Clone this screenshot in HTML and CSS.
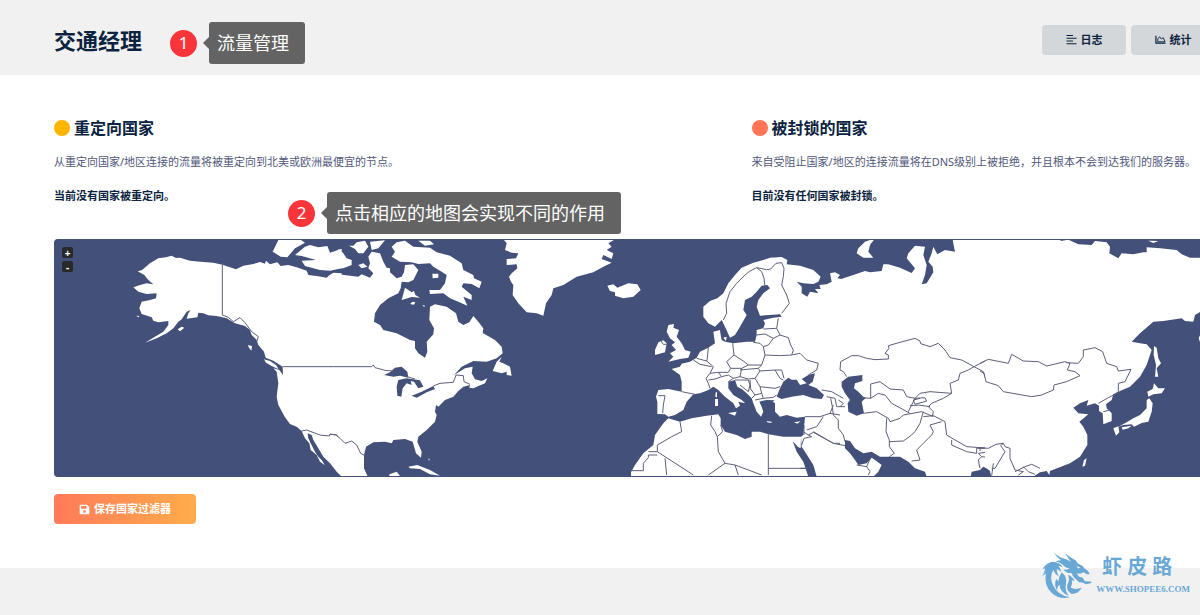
FILE: index.html
```html
<!DOCTYPE html>
<html lang="zh-CN">
<head>
<meta charset="utf-8">
<meta name="viewport" content="width=device-width, initial-scale=1">
<title>交通经理</title>
<link rel="stylesheet" href="styles.css">
</head>
<body>
<header class="page-header">
  <h1 class="page-title">交通经理</h1>
  <div class="actions">
    <button class="btn btn-muted" type="button">
      <svg class="icon" viewBox="0 0 22 22" aria-hidden="true"><path d="M1 3h13M1 8.500h20M1 14h13M1 19.500h20" fill="none" stroke="currentColor" stroke-width="2"/></svg>
      日志
    </button>
    <button class="btn btn-muted" type="button">
      <svg class="icon" viewBox="0 0 24 22" aria-hidden="true"><path d="M2 3v16h21" fill="none" stroke="currentColor" stroke-width="2.600"/><path d="M6 16v-6l4-5 4 5 4-3 4 9z" fill="none" stroke="currentColor" stroke-width="2"/></svg>
      统计
    </button>
  </div>
</header>

<main class="content">
  <div class="filters">
    <section class="filter">
      <h2 class="filter-title"><span class="dot dot-redirect"></span>重定向国家</h2>
      <p class="filter-text">从重定向国家/地区连接的流量将被重定向到北美或欧洲最便宜的节点。</p>
      <p class="filter-status">当前没有国家被重定向。</p>
    </section>
    <section class="filter">
      <h2 class="filter-title"><span class="dot dot-blocked"></span>被封锁的国家</h2>
      <p class="filter-text">来自受阻止国家/地区的连接流量将在DNS级别上被拒绝，并且根本不会到达我们的服务器。</p>
      <p class="filter-status">目前没有任何国家被封锁。</p>
    </section>
  </div>

  <div class="map">
    <div class="map-zoom">
      <button class="zoom-btn" type="button" aria-label="放大">+</button>
      <button class="zoom-btn" type="button" aria-label="缩小">-</button>
    </div>
    <svg class="map-canvas" viewBox="165 720 3435 708" preserveAspectRatio="xMinYMin slice" role="img" aria-label="世界地图">
      <!-- Alaska, western Canada and USA -->
      <g transform="translate(120 690)">
        <path class="land" d="M293 124L306 120 330 100 355 85 378 82 395 77 408 84 420 83 450 92 490 96 520 98 547 104 570 112 588 118 610 107 640 102 660 96 675 101 678 92 690 103 712 97 722 108 745 105 770 112 800 122 805 135 830 138 860 143 868 136 880 128 905 130 905 740 890 725 870 700 850 680 835 655 820 630 815 615 803 610 805 625 812 640 825 665 835 680 845 690 855 706 840 695 830 675 812 660 808 640 795 625 785 603 770 590 750 582 735 562 715 525 710 500 715 460 710 425 700 415 718 420 729 435 728 410 700 392 677 383 672 365 655 345 650 330 635 315 630 300 615 288 585 280 560 265 530 258 505 256 490 250 475 248 472 262 450 265 440 266 445 250 452 240 440 245 425 268 415 275 400 295 380 310 350 325 315 338 345 320 370 305 385 285 385 273 355 277 340 272 335 262 305 252 298 235 305 215 330 210 348 205 350 190 320 192 295 185 280 172 300 165 320 160 340 163 325 150 313 135z"/>
        <path class="land" d="M413 298L425 290 433 293 420 304zM288 257L298 258 296 262zM623 345L636 348 634 362 628 355zM672 388L690 393 708 405 716 418 695 408 678 398zM715 30L698 65 722 80 742 82 765 55 795 38 780 28zM795 50L765 75 785 78 828 90 785 92 795 108 840 120 870 122 905 115 905 56 870 68 862 48 835 52 810 45z"/>
        <path class="border" d="M547 104V255L565 262 580 275 600 263 615 278 635 305 655 320 650 335M728 410H872M785 603L800 600 840 615 868 618 870 612 890 615 900 625"/>
      </g>
      <!-- Eastern North America, Greenland, Iceland -->
      <g transform="translate(990 555)">
        <path class="land" d="M25 268L60 272 85 275 95 268 120 278 130 265 115 250 120 235 115 215 125 200 150 205 160 230 170 248 180 250 180 262 200 280 215 275 222 262 225 240 250 238 265 255 250 285 235 292 215 290 212 310 205 325 175 340 150 360 135 385 132 410 150 420 160 435 200 445 240 465 255 468 255 490 265 505 285 518 292 500 290 470 310 448 312 430 298 405 300 365 315 358 350 365 378 385 385 410 400 420 418 412 430 393 445 410 460 430 458 444 495 465 515 485 518 505 500 520 470 530 430 528 395 545 372 570 405 550 428 545 425 565 435 583 455 588 472 580 465 595 430 610 418 608 420 600 400 605 385 618 370 635 345 645 325 665 318 660 315 680 320 690 315 710 290 735 265 755 262 770 275 800 273 818 258 805 248 770 225 762 190 765 185 775 165 770 130 772 108 785 102 810 102 850 112 872 112 885 36 885 25 840z"/>
        <path class="land" d="M25 191L40 205 50 220 65 225 65 240 40 250 25 250zM85 240L100 235 112 245 95 250zM57 182L70 182 80 172 105 167 115 185 100 205 85 205 75 192zM120 170L165 166 145 190 125 195zM185 185L200 172 225 167 250 185 300 188 320 202 360 212 395 235 400 255 430 270 432 280 455 290 448 310 425 297 400 295 395 305 425 330 425 345 400 335 412 362 385 350 360 340 340 325 300 327 298 315 330 315 345 295 350 270 335 260 310 245 300 235 265 237 245 232 210 230 185 215 195 200zM225 308L245 322 252 318 256 330 270 338 245 336 215 345zM307 266L325 266 325 278 308 280zM240 357L248 350 256 352 252 359zM277 362L283 360 284 366zM265 167L300 167 312 178 285 182z"/>
        <path class="land" d="M515 515L508 530 520 535 540 545 545 572 530 570 530 560 515 565 488 558 500 530zM235 845L262 840 300 855 330 872 300 868 270 852 240 850zM178 868L200 860 210 872 178 876zM295 820l4 2-2 6z"/>
        <path class="land" d="M518 160L530 175 525 195 545 203 565 205 558 220 530 222 530 240 560 238 562 250 545 265 537 275 543 290 550 300 548 330 565 355 590 382 620 385 640 392 648 355 665 330 670 310 700 300 740 275 790 262 820 245 845 233 815 222 820 210 845 222 850 205 830 195 845 185 835 175 860 160zM832 302L850 298 862 308 895 295 922 298 932 315 910 335 880 340 855 332 855 322 840 318z"/>
        <path class="sea" d="M162 570L180 562 195 548 215 545 232 560 235 578 210 572 190 575zM205 585L230 580 270 586 280 605 265 610 252 590 242 588 245 600 230 595 218 610 214 635 202 632 200 605zM245 632L275 620 310 603 315 612 290 622 260 638z"/>
        <path class="border" d="M0 545H125L130 540 135 548 165 556 190 558M232 575L255 582M310 603L330 595 370 592 378 570 400 572 402 590 420 598M30 760L45 775 65 768 80 780 92 805 105 812M0 748Q18 745 30 760"/>
      </g>
      <!-- Europe and northern Africa -->
      <g transform="translate(1800 705)">
        <path class="land" d="M310 215L330 198 352 190 370 175 385 145 405 120 425 98 460 83 490 75 510 68 545 66 562 75 560 88 600 92 640 105 662 125 655 140 640 147 610 145 590 140 605 155 605 175 622 185 630 170 655 175 645 162 662 162 658 150 680 148 695 140 690 115 705 112 720 120 712 130 730 133 730 725 650 725 640 690 615 650 605 635 603 605 610 600 615 545 590 548 560 540 540 545 525 530 525 505 518 500 524 496 500 495 488 497 478 500 485 515 490 530 483 545 470 530 460 505 455 490 440 475 425 462 412 455 405 435 385 440 385 460 400 480 425 495 436 505 415 500 420 512 408 520 400 505 375 485 355 465 340 455 325 465 300 475 280 478 260 500 250 525 225 540 205 545 195 538 172 537 172 500 168 485 175 465 205 462 245 470 245 440 240 420 215 402 240 395 245 386 270 380 290 368 300 350 325 338 345 325 340 290 360 285 362 300 365 315 375 320 400 325 440 320 465 320 470 300 470 285 490 280 495 265 490 255 520 248 545 245 540 238 480 242 470 215 475 195 490 175 510 160 502 150 485 152 470 170 455 185 435 195 430 225 440 240 420 275 405 300 390 308 375 275 365 255 345 275 325 265 310 245z"/>
        <path class="land" d="M205 270L222 267 220 278 237 285 230 305 245 325 255 345 272 350 265 368 240 372 205 380 220 365 210 355 228 345 215 330 225 322 210 310 200 290zM165 345L175 322 190 316 200 325 195 352 165 360zM370 308L380 305 378 318zM384 534L410 530 405 542zM345 492H354V513H345zM347 472L351 472 351 487 346 485zM500 558L515 560 514 564 502 562zM582 562L602 559 592 566z"/>
        <path class="land" d="M93 712L105 690 130 655 160 630 165 600 190 565 205 550 240 560 275 550 320 542 355 538 362 550 362 570 375 590 410 600 435 612 455 605 455 590 480 590 505 598 550 605 603 605 602 640 593 635 578 618 590 650 610 680 625 725 93 725z"/>
        <path class="sea" d="M540 460L550 440 565 428 575 434 590 434 600 450 620 445 605 432 625 420 645 415 638 440 625 450 650 460 672 480 665 492 640 490 610 480 575 485 545 492 530 485z"/>
        <path class="border" d="M370 255L380 235 378 205 390 170 410 145 435 120 450 108 470 98 500 104 512 102 528 85 545 83 552 100 550 125 545 150 560 180 568 205 545 235M470 98L485 110 492 130 495 155M535 250L530 280 490 282M530 280L540 300 520 310 495 297 470 300M540 300L565 308 572 330 580 345 575 360 540 362 495 360 490 335 505 330 520 310M490 335L480 325 460 322M575 360L600 355 620 375 655 385 650 405 625 420M398 325L402 360 430 378 445 390 485 390 495 360M325 338L322 370 320 378 340 395 330 415 318 430 325 445 330 460M290 370L320 378M280 375L300 388 335 395M402 360L380 380 392 400 425 400 445 390M330 415L355 412 365 425 345 432 325 435M355 412L385 412 392 400M365 425L385 420 400 430 420 425 425 400M420 405L440 403 475 400 485 390M420 425L445 432 465 430 480 408 475 400M385 440L400 430M465 430L480 455 525 460 540 455M480 408L525 405 540 430 550 435M525 405L545 405 552 430M405 435L445 435 450 450 445 470 420 450M450 435L452 462 465 480 455 490M480 455L485 475 465 480M485 475L490 490 465 495M490 490L520 487 530 480M245 470L285 478M175 482H195L190 510 188 535M183 318L190 328 200 328"/>
        <path class="border" d="M240 560L245 590 215 605 172 630V650L280 720M172 660H145V668L130 685V707H95M145 650H172M195 670L200 720M335 542L332 570 345 590 352 605 355 650 375 685 325 720M375 685L405 690 415 720M405 690L485 720M362 570L368 590 352 605M505 598V720M505 700H622M615 545L660 545 690 535 720 540M620 585L650 575 670 545M605 630L612 610 635 605 625 600 640 592 700 625 730 625M610 590L625 600M690 535L700 510M612 570V600"/>
      </g>
      <!-- Western Russia, Central Asia, Middle East -->
      <g transform="translate(2400 705)">
        <path class="land" d="M120 132L112 138 130 130 160 120 195 108 210 112 245 108 250 88 265 88 300 98 335 114 345 100 320 70 325 55 345 32 375 35 370 60 380 90 375 120 365 148 380 145 400 112 398 95 385 80 395 55 400 35 412 58 435 45 465 50 457 10 600 10 600 725 575 725 570 705 550 695 540 705 515 710 512 725 380 725 375 710 345 700 325 680 300 665 240 665 215 650 190 655 165 640 150 618 135 615 135 640 150 655 165 675 175 690 200 685 215 668 225 675 245 690 235 710 220 725 120 725z"/>
        <path class="land" d="M170 55L175 40 195 20 225 10 210 30 205 50 220 68 190 68z"/>
        <path class="sea" d="M125 440L145 425 187 420 187 438 165 445 162 460 175 470 190 485 198 488 185 500 192 535 170 542 145 530 143 505 150 495 135 475 125 455z"/>
        <path class="border" d="M65 465L95 470 130 490M80 485L105 490 110 515 135 515M92 490L97 515 100 540 115 555 115 580 130 600 135 620M115 495L130 505 120 515M140 425L130 410 120 405 122 380 155 362 175 362 200 370 225 374 265 372 265 360 255 355 267 340 265 332 300 322 345 310 360 318 362 326 390 335 415 325 435 345 450 368 485 375 522 395 565 373 600 380M522 395L505 405 480 415 475 435 450 445 455 475 390 470 360 475 345 490 320 485 310 465 270 462 240 440 212 447V490L187 488M212 490L235 475 255 480 275 505 330 535M190 535L230 530 265 550 270 560 300 550 310 540 365 530 400 545M345 490L335 510 325 530M455 475L430 490 395 505 385 515 400 530 397 545M345 490L375 488 380 498 345 508 340 495 360 490M330 512L355 510 390 515M260 550L258 590 268 615V635L283 655 268 665M268 620L310 618 335 600 345 590 360 565 370 530M370 545L400 542 435 560 440 600 460 612 500 635 570 640 600 625M425 560L390 570 400 590 395 600 350 645 360 675 335 678M455 615L455 630 500 650 530 655V640H560L570 650 535 655 545 665 535 675 540 700M545 665L570 668 560 680 570 690 575 705 600 640M522 395L550 410 560 440 600 455M170 690L200 695 210 672M200 695L210 710 205 720M0 700H18M40 590L100 625 135 632"/>
      </g>
      <!-- East Asia and Japan -->
      <g transform="translate(2940 705)">
        <path class="land" d="M15 10H240L242 18 265 14 295 28 335 30 345 18 380 22 390 35 388 55 415 70 425 55 460 58 490 52 500 52 500 37 540 40 590 45 605 58 630 68 670 68 670 225 645 240 640 260 615 258 605 250 590 252 550 258 520 260 480 295 455 320 480 325 500 328 515 345 500 390 480 425 450 455 420 468 400 478 395 495 378 508 380 520 395 535 395 558 370 568 368 535 357 528 357 512 345 505 320 512 325 495 300 505 280 518 295 535 325 538 298 560 310 575 322 600 322 630 300 665 270 685 210 708 208 720 200 708 180 712 160 725 34 725 30 708 20 700 15 690z"/>
        <path class="land" d="M522 333L530 338 535 370 543 385 530 400 535 425 525 425 528 390 521 360zM522 445L535 460 555 460 545 475 520 478 505 485 502 470 518 462zM508 490L518 505 515 530 505 560 485 564 462 575 455 568 430 570 415 575 440 562 460 550 480 540 500 520 500 495zM400 580L415 574 418 592 408 602zM425 577L455 572 445 580 428 584zM312 675L320 670 315 692 307 695zM505 17L535 18 520 24zM665 290L656 310 665 335z"/>
        <path class="border" d="M0 385L25 373 85 385 95 358 130 378 175 380 200 393 255 380 270 385 262 405 285 410 300 422 260 440 222 450 220 465 185 480 155 485 70 470 55 452 18 440 12 415 0 408M258 383L295 385 310 365 310 345 345 338 368 350 380 385 410 395 415 408 453 403 435 440 415 445 415 470 405 478 385 488 355 505M370 530L390 525M0 648L0 638 25 640 48 628 70 625 75 635 90 640 90 670 105 705 130 710 115 720M70 625L62 632 75 650 45 700 35 700M40 685L35 722M105 710L135 695 155 688 180 700M130 695L145 710 165 718"/>
      </g>
    </svg>
  </div>

  <button class="btn btn-save" type="button">
    <svg class="icon" viewBox="0 0 448 512" aria-hidden="true"><path fill="currentColor" d="M433.941 129.941l-83.882-83.882A48 48 0 0 0 316.118 32H48C21.490 32 0 53.490 0 80v352c0 26.510 21.490 48 48 48h352c26.510 0 48-21.490 48-48V163.882a48 48 0 0 0-14.059-33.941zM224 416c-35.346 0-64-28.654-64-64 0-35.346 28.654-64 64-64s64 28.654 64 64c0 35.346-28.654 64-64 64zm96-304.520V212c0 6.627-5.373 12-12 12H76c-6.627 0-12-5.373-12-12V108c0-6.627 5.373-12 12-12h228.520c3.183 0 6.235 1.264 8.485 3.515l3.480 3.480A11.996 11.996 0 0 1 320 111.480z"/></svg>
    保存国家过滤器
  </button>
</main>

<aside class="callout callout-title"><span class="callout-num">1</span><span class="callout-text">流量管理</span></aside>
<aside class="callout callout-map"><span class="callout-num">2</span><span class="callout-text">点击相应的地图会实现不同的作用</span></aside>

<div class="watermark">
  <svg class="watermark-logo" viewBox="34 34 152 146" aria-hidden="true">
    <g fill="#69a8d5">
      <path d="M69 37Q82 52 100 57Q112 60 121 67L104 41Q119 54 137 63L142 71Q157 77 163 87Q177 94 179 105L170 105 161 99Q148 106 139 101Q146 113 148 112L158 115 164 126 183 127 184 131 168 135 157 130 147 129 136 119Q126 111 124 101Q109 103 99 91Q111 91 119 87Q104 85 96 75Q87 67 75 66Q85 62 92 62Q77 52 69 37z"/>
      <path d="M36 88Q48 70 66 67Q88 68 98 84L84 79Q91 88 92 97L79 88Q78 100 86 112Q73 105 68 92Q56 115 68 139Q82 169 119 175Q86 183 63 161Q39 139 46 102L35 111Q43 98 43 87z"/>
      <path d="M94 99Q111 113 107 132Q102 155 116 171Q88 160 87 136Q78 145 81 156Q69 139 77 119L84 126Q85 112 94 99z"/>
      <path d="M113 106Q129 113 133 126L124 122Q128 133 121 145Q134 153 155 146Q144 165 124 165Q106 154 111 136Q120 122 113 106z"/>
    </g>
    <path d="M139 80L151 84 144 87z" fill="#f5f8fa"/>
  </svg>
  <div class="watermark-text">
    <div class="watermark-name"><span>虾</span><span>皮</span><span>路</span></div>
    <div class="watermark-url">WWW.SHOPEE6.COM</div>
  </div>
</div>
</body>
</html>
```

FILE: styles.css
```css
* {
  box-sizing: border-box;
}

body {
  margin: 0;
  min-height: 100vh;
  position: relative;
  overflow: hidden;
  background: #f1f1f1;
  color: #0b2340;
  font-family: "Noto Sans", "Noto Sans CJK SC", sans-serif;
}

h1,
h2,
p {
  margin: 0;
}

.page-header {
  display: flex;
  align-items: center;
  justify-content: space-between;
  min-height: 75px;
  margin-right: -15px;
  padding: 4px 0 0 54px;
}

.page-title {
  font-size: 22px;
  line-height: 30px;
}

.actions {
  display: flex;
  gap: 5px;
}

.btn {
  display: flex;
  align-items: center;
  justify-content: center;
  gap: 4px;
  height: 30px;
  border: 0;
  border-radius: 4px;
  font-family: inherit;
  font-size: 11px;
  font-weight: 700;
  line-height: 16px;
}

.btn-muted {
  width: 84px;
  background: #d4d7d9;
  color: #0b2340;
}

.btn-save {
  width: 142px;
  background: linear-gradient(90deg, #ff7a59, #ffac4b);
  color: #fff;
}

.icon {
  width: 11px;
  height: 11px;
}

.content {
  padding: 42px 0 44px 54px;
  background: #fff;
}

.filters {
  display: grid;
  grid-template-columns: 14fr 9fr;
  margin-bottom: 34px;
}

.filter {
  white-space: nowrap;
}

.filter-title {
  display: flex;
  align-items: center;
  gap: 4px;
  font-size: 16px;
  line-height: 22px;
}

.dot {
  width: 16px;
  height: 16px;
  border-radius: 50%;
}

.dot-redirect {
  background: #ffb400;
}

.dot-blocked {
  background: #ff7555;
}

.filter-text,
.filter-status {
  font-size: 11px;
  line-height: 18px;
}

.filter-text {
  margin-top: 14px;
  color: #50577a;
}

.filter-status {
  margin-top: 16px;
  font-weight: 700;
}

.map {
  position: relative;
  overflow: hidden;
  margin-bottom: 17px;
  border: 1px solid #43517a;
  border-right: 0;
  border-radius: 4px 0 0 4px;
  background: #43517a;
}

.map-canvas {
  display: block;
  width: 100%;
  height: 236px;
}

.land {
  fill: #fff;
}

.sea {
  fill: #43517a;
}

.border {
  fill: none;
  stroke: #5c607a;
  stroke-width: 3;
  stroke-linejoin: round;
}

.map-zoom {
  position: absolute;
  top: 7px;
  left: 7px;
  display: grid;
  gap: 3px;
}

.zoom-btn {
  width: 11px;
  height: 11px;
  padding: 0;
  border: 0;
  border-radius: 2px;
  background: #292929;
  color: #fff;
  font-family: inherit;
  font-size: 10px;
  font-weight: 700;
  line-height: 10px;
}

.callout {
  position: absolute;
  display: flex;
  align-items: center;
  gap: 12px;
  color: #fff;
  font-size: 18px;
  line-height: 26px;
}

.callout-title {
  top: 22px;
  left: 170px;
}

.callout-map {
  top: 192px;
  left: 288px;
}

.callout-num {
  width: 27px;
  height: 27px;
  border-radius: 50%;
  background: #fa3539;
  font-size: 17px;
  text-align: center;
}

.callout-text {
  position: relative;
  padding: 8px 16px 8px 8px;
  border-radius: 3px;
  background: #636363;
}

.callout-text::before {
  content: "";
  position: absolute;
  top: 15px;
  left: -6px;
  border: 6px solid transparent;
  border-left: 0;
  border-right-color: #636363;
}

.watermark {
  position: absolute;
  right: 10px;
  bottom: 15px;
  display: flex;
  align-items: center;
  gap: 4px;
  color: #69a8d5;
}

.watermark-logo {
  width: 50px;
  height: 50px;
}

.watermark-name {
  display: flex;
  gap: 5px;
  padding-left: 6px;
  font-size: 20px;
  font-weight: 700;
  line-height: 28px;
}

.watermark-url {
  font-family: "Liberation Serif", serif;
  font-size: 9px;
  font-weight: 700;
  line-height: 16px;
}
```
